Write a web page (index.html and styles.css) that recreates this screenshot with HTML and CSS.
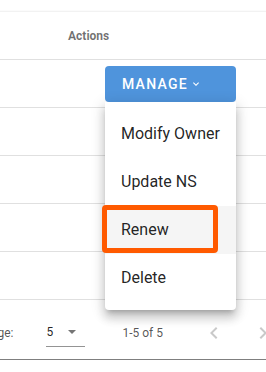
FILE: index.html
```html
<!DOCTYPE html>
<html lang="en">

<head>
    <meta charset="UTF-8">
    <meta name="viewport" content="width=device-width, initial-scale=1.0">
    <title>Domains</title>
    <link rel="stylesheet" href="styles.css">
</head>

<body>
    <div class="card">
        <div class="row head">
            <div></div>
            <div class="th">Actions</div>
        </div>

        <div class="row">
            <div></div>
            <div class="cell">
                <div class="manage">
                    <button class="manage-btn">
                        Manage
                        <svg class="chev" viewBox="0 0 24 24" width="12" height="12">
                            <path d="M16.59 8.59L12 13.17 7.41 8.59 6 10l6 6 6-6z" fill="#fff"/>
                        </svg>
                    </button>
                    <ul class="menu">
                        <li>Modify Owner</li>
                        <li>Update NS</li>
                        <li class="active">Renew<span class="mark"></span></li>
                        <li>Delete</li>
                    </ul>
                </div>
            </div>
        </div>
        <div class="row"><div></div><div class="cell"></div></div>
        <div class="row"><div></div><div class="cell"></div></div>
        <div class="row"><div></div><div class="cell"></div></div>
        <div class="row"><div></div><div class="cell"></div></div>

        <div class="footer">
            <span class="label">Rows per page:</span>
            <div class="select">
                <span>5</span>
                <span class="caret"></span>
            </div>
            <span class="range">1-5 of 5</span>
            <span class="page-btn prev">
                <svg viewBox="0 0 24 24" width="24" height="24">
                    <path d="M15.41 7.41L14 6l-6 6 6 6 1.41-1.41L10.83 12z" fill="#c9c9c9"/>
                </svg>
            </span>
            <span class="page-btn next">
                <svg viewBox="0 0 24 24" width="24" height="24">
                    <path d="M10 6L8.59 7.41 13.17 12l-4.58 4.59L10 18l6-6z" fill="#c9c9c9"/>
                </svg>
            </span>
        </div>
    </div>
</body>

</html>
```

FILE: styles.css
```css
* {
    padding: 0;
    margin: 0;
    box-sizing: border-box;
}

body {
    background-color: #ffffff;
    font-family: Roboto, "Liberation Sans", sans-serif;
    overflow: hidden;
    padding-top: 11px;
}

.card {
    margin-left: -200px;
    width: 560px;
    border-top: 1px solid #f2f2f2;
    border-bottom: 1px solid #7f7f7f;
    box-shadow: 0 1px 2px rgba(0, 0, 0, 0.25);
}

.row {
    display: grid;
    grid-template-columns: 268px 1fr;
    height: 48px;
    border-bottom: 1px solid #e0e0e0;
}

.th {
    display: flex;
    align-items: center;
    font-size: 12px;
    font-weight: 700;
    color: rgba(0, 0, 0, 0.56);
}

.cell {
    display: flex;
    align-items: center;
    padding-left: 37px;
}

.manage {
    position: relative;
    width: 131px;
}

.manage-btn {
    display: flex;
    align-items: center;
    width: 131px;
    height: 36px;
    padding-left: 17px;
    border: none;
    border-radius: 4px;
    background-color: #4f94dc;
    color: #ffffff;
    font-family: inherit;
    font-size: 14px;
    font-weight: 500;
    letter-spacing: 1.25px;
    text-transform: uppercase;
}

.chev {
    margin-left: 2px;
}

.menu {
    position: absolute;
    top: 36px;
    left: 0;
    width: 131px;
    padding: 8px 0;
    list-style: none;
    background-color: #ffffff;
    border-radius: 0 0 4px 4px;
    box-shadow: 0 5px 5px -3px rgba(0, 0, 0, 0.2), 0 8px 10px 1px rgba(0, 0, 0, 0.14), 0 3px 14px 2px rgba(0, 0, 0, 0.12);
    z-index: 2;
}

.menu li {
    position: relative;
    display: flex;
    align-items: center;
    height: 48px;
    padding: 0 16px;
    font-size: 16px;
    color: rgba(0, 0, 0, 0.87);
}

.menu li.active {
    background-color: #f5f5f5;
}

.mark {
    position: absolute;
    left: -3px;
    top: -1px;
    width: 116px;
    height: 48px;
    border: 5px solid #ff5a00;
    border-radius: 4px;
}

.footer {
    display: flex;
    align-items: center;
    justify-content: flex-end;
    height: 59px;
    padding: 6px 85px 0 0;
    font-size: 12px;
    color: rgba(0, 0, 0, 0.68);
}

.select {
    display: flex;
    align-items: center;
    width: 39px;
    margin-left: 33px;
    padding: 6px 0;
    border-bottom: 1px solid rgba(0, 0, 0, 0.42);
    line-height: 16px;
    color: rgba(0, 0, 0, 0.87);
}

.caret {
    margin-left: 15px;
    border-left: 4px solid transparent;
    border-right: 4px solid transparent;
    border-top: 4px solid #757575;
}

.range {
    margin-left: 37px;
}

.page-btn {
    display: flex;
    width: 24px;
    height: 24px;
}

.prev {
    margin-left: 39px;
}

.next {
    margin-left: 25px;
}
```
